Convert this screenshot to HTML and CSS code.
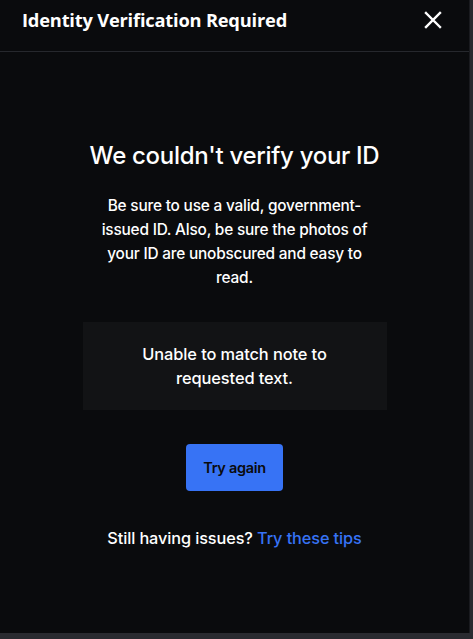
FILE: index.html
```html
<!DOCTYPE html>
<html lang="en">
<head>
<meta charset="utf-8">
<title>Identity Verification Required</title>
<link rel="stylesheet" href="styles.css">
</head>
<body>
<div class="modal">
  <header class="modal-header">
    <h1 class="modal-title">Identity Verification Required</h1>
    <button class="close" aria-label="Close">
      <svg width="18" height="18" viewBox="0 0 18 18"><path d="M2 2L16 16M16 2L2 16" stroke="#fff" stroke-width="2.4" stroke-linecap="square"/></svg>
    </button>
  </header>
  <main class="modal-body">
    <h2 class="heading">We couldn't verify your ID</h2>
    <p class="desc">Be sure to use a valid, government-issued ID. Also, be sure the photos of your ID are unobscured and easy to read.</p>
    <div class="note">Unable to match note to requested text.</div>
    <button class="btn">Try again</button>
    <p class="help">Still having issues? <a href="#" class="link">Try these tips</a></p>
  </main>
</div>
</body>
</html>
```
FILE: styles.css
```css
html, body {
  margin: 0;
  padding: 0;
  background: #2a2b30;
  height: 100%;
}
body {
  font-family: Inter, "Noto Sans", sans-serif;
  color: #fff;
  display: flex;
  flex-direction: column;
}
.modal {
  width: 470px;
  height: 633px;
  background: #0a0b0d;
  border-right: 1px solid #1a1b1f;
  box-sizing: border-box;
  display: flex;
  flex-direction: column;
}
.modal-header {
  height: 52px;
  box-sizing: border-box;
  border-bottom: 1px solid #26282d;
  display: flex;
  align-items: flex-start;
  justify-content: space-between;
  padding: 6px 26px 0 22px;
}
.modal-title {
  margin: 0;
  font-family: "Open Sans", "Noto Sans", sans-serif;
  font-weight: 700;
  font-size: 18.3px;
  line-height: 28px;
  letter-spacing: -0.2px;
  color: #fff;
}
.close {
  background: none;
  border: 0;
  padding: 0;
  width: 18px;
  height: 18px;
  display: flex;
  margin-top: 5px;
  margin-right: 1px;
}
.modal-body {
  display: flex;
  flex-direction: column;
  align-items: center;
  padding-top: 88px;
}
.heading {
  margin: 0;
  font-size: 24px;
  font-weight: 500;
  letter-spacing: -0.3px;
  line-height: 32px;
}
.desc {
  margin: 22px 0 0;
  width: 290px;
  text-align: center;
  font-size: 15.4px;
  font-weight: 500;
  line-height: 24px;
  letter-spacing: -0.2px;
}
.note {
  margin-top: 32px;
  width: 304px;
  height: 88px;
  box-sizing: border-box;
  padding: 20px 40px;
  background: #121315;
  text-align: center;
  font-size: 16.4px;
  font-weight: 500;
  line-height: 24px;
  letter-spacing: -0.1px;
}
.btn {
  margin-top: 34px;
  width: 97px;
  height: 47px;
  border: 0;
  border-radius: 4px;
  background: #3773f5;
  color: #0a0b0d;
  font-family: Inter, "Noto Sans", sans-serif;
  font-size: 14.5px;
  font-weight: 600;
  letter-spacing: -0.3px;
}
.help {
  margin: 35px 0 0;
  font-size: 16.3px;
  font-weight: 500;
  letter-spacing: -0.1px;
  line-height: 24px;
}
.link {
  color: #3773f5;
  text-decoration: none;
}
```
